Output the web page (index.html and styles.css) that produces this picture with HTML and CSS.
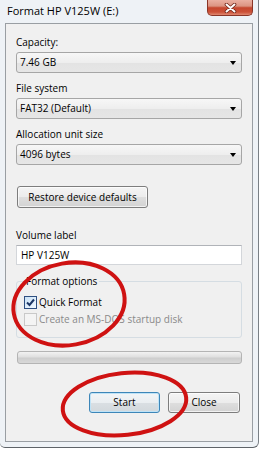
FILE: index.html
```html
<!DOCTYPE html>
<html>
<head>
<meta charset="utf-8">
<link rel="stylesheet" href="styles.css">
</head>
<body>
<div class="window">
  <div class="titlebar">
    <span class="title">Format HP V125W (E:)</span>
    <div class="closebtn">
      <svg width="13" height="10" viewBox="0 0 13 10">
        <path d="M2.5 1.5 L10.5 8.5 M10.5 1.5 L2.5 8.5" stroke="#6e2418" stroke-width="3.6" stroke-linecap="round"/>
        <path d="M2.5 1.5 L10.5 8.5 M10.5 1.5 L2.5 8.5" stroke="#ffffff" stroke-width="2" stroke-linecap="round"/>
      </svg>
    </div>
  </div>
  <div class="panel">
    <div class="label first">Capacity:</div>
    <div class="combo"><span>7.46 GB</span><span class="arrow"></span></div>
    <div class="label">File system</div>
    <div class="combo"><span>FAT32 (Default)</span><span class="arrow"></span></div>
    <div class="label">Allocation unit size</div>
    <div class="combo"><span>4096 bytes</span><span class="arrow"></span></div>
    <div class="btnrow"><button class="btn restore">Restore device defaults</button></div>
    <div class="label vol">Volume label</div>
    <div class="textbox">HP V125W</div>
    <fieldset class="group">
      <legend>Format options</legend>
      <div class="check">
        <span class="box checked">
          <svg width="11" height="11" viewBox="0 0 11 11"><path d="M2 5.5 L4.5 8 L9 2.5" fill="none" stroke="#1d3766" stroke-width="2"/></svg>
        </span>
        <span>Quick Format</span>
      </div>
      <div class="check disabled">
        <span class="box"></span>
        <span>Create an MS-DOS startup disk</span>
      </div>
    </fieldset>
    <div class="progress"></div>
    <div class="actions">
      <button class="btn default">Start</button>
      <button class="btn">Close</button>
    </div>
  </div>
  <svg class="annot" width="260" height="450" viewBox="0 0 260 450">
    <ellipse cx="69" cy="304" rx="56" ry="41" transform="rotate(-10 69 304)" fill="none" stroke="#cf1212" stroke-width="4"/>
    <ellipse cx="124.5" cy="404" rx="62" ry="31" transform="rotate(-6 124.5 404)" fill="none" stroke="#cf1212" stroke-width="4"/>
  </svg>
</div>
</body>
</html>
```
FILE: styles.css
```css
body {
  margin: 0;
  background: #ffffff;
  font-family: "Open Sans", "Noto Sans", sans-serif;
  font-size: 10px;
  color: #000;
}

.window {
  position: relative;
  width: 259px;
  height: 448px;
  box-sizing: border-box;
  background: #eef2f6;
  border-right: 1px solid #7a8086;
  border-bottom: 1px solid #5e6368;
  border-bottom-left-radius: 5px;
  border-bottom-right-radius: 6px;
}

.titlebar {
  display: flex;
  justify-content: space-between;
  align-items: flex-start;
  height: 23px;
}

.title {
  font-size: 11px;
  line-height: 15px;
  padding: 3px 0 0 7px;
  color: #000;
}

.closebtn {
  width: 46px;
  height: 16px;
  margin-right: 5px;
  box-sizing: border-box;
  border: 1px solid #8a3527;
  border-top: none;
  border-radius: 0 0 5px 5px;
  background: linear-gradient(#eab0a2, #dc9583 40%, #c5472f 52%, #cc5138 80%, #e08a72);
  display: flex;
  align-items: center;
  justify-content: center;
}

.panel {
  margin-left: 5px;
  width: 248px;
  height: 419px;
  box-sizing: border-box;
  border: 1px solid #999ea3;
  background: #f0f0f0;
  padding: 12px 10px 0 10px;
  display: flex;
  flex-direction: column;
}

.label {
  line-height: 13px;
  height: 13px;
  margin-top: 9px;
}

.label.first {
  margin-top: 0;
}

.label.vol {
  margin-top: 21px;
}

.combo {
  margin-top: 3px;
  height: 21px;
  box-sizing: border-box;
  border: 1px solid #a6a6a6;
  border-radius: 3px;
  background: linear-gradient(#f7f7f7, #eeeeee 50%, #e3e3e3 51%, #e6e6e6);
  display: flex;
  align-items: center;
  justify-content: space-between;
  padding: 0 5px 0 3px;
  line-height: 13px;
}

.arrow {
  width: 0;
  height: 0;
  border-left: 3.5px solid transparent;
  border-right: 3.5px solid transparent;
  border-top: 4px solid #000;
  margin-top: 1px;
}

.btnrow {
  margin-top: 21px;
  display: flex;
}

.btn {
  font-family: "Open Sans", "Noto Sans", sans-serif;
  font-size: 10px;
  color: #000;
  line-height: 13px;
  height: 21px;
  box-sizing: border-box;
  border: 1px solid #7d7d7d;
  border-radius: 3px;
  background: linear-gradient(#f4f4f4, #ececec 50%, #dedede 51%, #d3d3d3);
  box-shadow: inset 0 0 0 1px rgba(255,255,255,0.7);
  padding: 0;
  margin: 0;
}

.restore {
  margin-left: 1px;
  width: 131px;
  height: 22px;
}

.textbox {
  margin-top: 3px;
  height: 20px;
  box-sizing: border-box;
  background: #fff;
  border: 1px solid #d3d6da;
  border-top-color: #b0b3b8;
  display: flex;
  align-items: center;
  padding-left: 4px;
  line-height: 13px;
}

.group {
  margin: 10px 0 0 0;
  border: 1px solid #d5dde3;
  border-radius: 3px;
  padding: 8px 0 11px 7px;
  min-width: 0;
}

.group legend {
  padding: 0 2px;
  line-height: 13px;
  height: 13px;
}

.check {
  display: flex;
  align-items: center;
  gap: 2px;
  line-height: 13px;
  height: 13px;
}

.check + .check {
  margin-top: 4px;
}

.box {
  width: 13px;
  height: 13px;
  box-sizing: border-box;
  border: 1px solid #c9c9c9;
  background: #f4f4f4;
  display: flex;
  align-items: center;
  justify-content: center;
}

.box.checked {
  border-color: #2f4f80;
  background: linear-gradient(135deg, #c9e1f5, #f3f9ff);
}

.check.disabled {
  color: #8a8a8a;
}

.progress {
  margin: 13px 0 0 1px;
  width: 225px;
  height: 13px;
  box-sizing: border-box;
  border: 1px solid #b4b4b4;
  border-radius: 3px;
  background: linear-gradient(#f2f2f2, #e0e0e0 45%, #cecece 55%, #d8d8d8);
}

.actions {
  margin-top: 28px;
  display: flex;
  justify-content: flex-end;
  gap: 8px;
  padding-right: 2px;
}

.actions .btn {
  width: 72px;
}

.actions .btn.default {
  width: 71px;
  border-color: #3d86b8;
  background: linear-gradient(#f2f5f7, #eaeef1 50%, #dadfe3 51%, #d2d8dc);
  box-shadow: inset 0 0 0 1px #bfe3f7;
}

.annot {
  position: absolute;
  left: 0;
  top: 0;
  pointer-events: none;
}
```
